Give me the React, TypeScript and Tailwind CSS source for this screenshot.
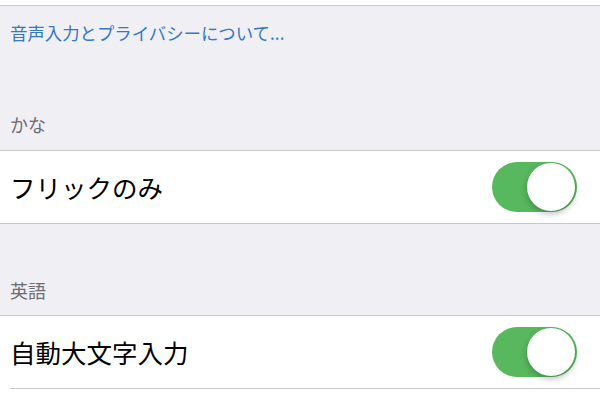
import React from "react";

const font = { fontFamily: '"Noto Sans CJK JP", "Noto Sans", sans-serif' };

function Toggle() {
  return (
    <div className="relative w-[85px] h-[50px] rounded-full bg-[#57b85d]">
      <div className="absolute right-[2px] top-[1px] w-[48px] h-[48px] rounded-full bg-white shadow-[0_3px_6px_rgba(0,0,0,0.25)]" />
    </div>
  );
}

export default function App() {
  return (
    <div className="w-[600px] h-[400px] overflow-hidden bg-[#efeff4]" style={font}>
      <div className="h-[5px] bg-white border-b border-[#c8c7cc] box-content" />
      <div className="h-[144px] flex flex-col px-[10px]">
        <div className="pt-[15px] text-[17.4px] leading-[24px] text-[#3478c6]">音声入力とプライバシーについて...</div>
        <div className="mt-auto pb-[14px] text-[18px] leading-[24px] text-[#6d6d72]">かな</div>
      </div>
      <div className="h-[72px] bg-white border-y border-[#c8c7cc] box-content flex items-center justify-between pl-[10px] pr-[23px]">
        <span className="text-[25.5px] leading-[30px] text-black">フリックのみ</span>
        <Toggle />
      </div>
      <div className="h-[91px] flex flex-col justify-end px-[10px] pb-[13px]">
        <div className="text-[18px] leading-[24px] text-[#6d6d72]">英語</div>
      </div>
      <div className="bg-white border-t border-[#c8c7cc]">
        <div className="h-[72px] flex items-center justify-between pl-[10px] pr-[23px]">
          <span className="text-[25.5px] leading-[30px] text-black">自動大文字入力</span>
          <Toggle />
        </div>
        <div className="ml-[10px] h-px bg-[#c8c7cc]" />
        <div className="h-[20px]" />
      </div>
    </div>
  );
}
